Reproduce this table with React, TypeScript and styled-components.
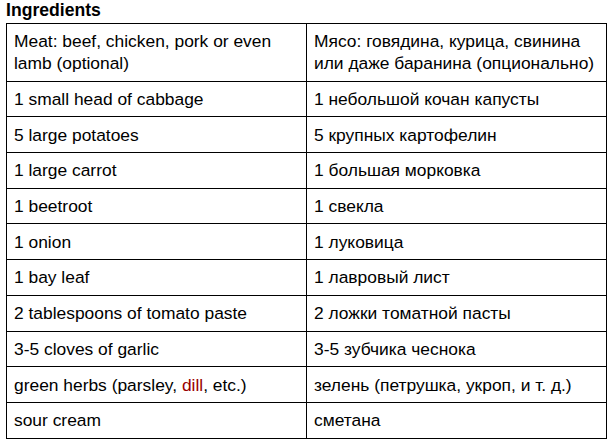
import styled, { createGlobalStyle } from "styled-components";

const GlobalStyle = createGlobalStyle`
  body {
    margin: 0;
    background: #fff;
    font-family: "Liberation Sans", Arial, sans-serif;
    color: #000;
  }
`;

const Page = styled.div`
  display: flex;
  flex-direction: column;
  gap: 2px;
  padding: 0 4px 0 6px;
`;

const Title = styled.div`
  height: 21px;
  font-size: 17.6px;
  font-weight: 700;
  line-height: 21px;
`;

const Table = styled.table`
  border-collapse: collapse;
  width: 601px;
  table-layout: fixed;
  font-size: 17.4px;
  line-height: 22px;
`;

const Cell = styled.td`
  border: 1px solid #000;
  padding: 6.35px 4px 6.35px 7px;
  vertical-align: top;
  width: 50%;
`;

const Flagged = styled.span`
  color: #990000;
`;

type Row = { en: React.ReactNode; ru: string };

const rows: Row[] = [
  {
    en: "Meat: beef, chicken, pork or even lamb (optional)",
    ru: "Мясо: говядина, курица, свинина или даже баранина (опционально)",
  },
  { en: "1 small head of cabbage", ru: "1 небольшой кочан капусты" },
  { en: "5 large potatoes", ru: "5 крупных картофелин" },
  { en: "1 large carrot", ru: "1 большая морковка" },
  { en: "1 beetroot", ru: "1 свекла" },
  { en: "1 onion", ru: "1 луковица" },
  { en: "1 bay leaf", ru: "1 лавровый лист" },
  { en: "2 tablespoons of tomato paste", ru: "2 ложки томатной пасты" },
  { en: "3-5 cloves of garlic", ru: "3-5 зубчика чеснока" },
  {
    en: (
      <>
        green herbs (parsley, <Flagged>dill</Flagged>, etc.)
      </>
    ),
    ru: "зелень (петрушка, укроп, и т. д.)",
  },
  { en: "sour cream", ru: "сметана" },
];

export default function App() {
  return (
    <Page>
      <GlobalStyle />
      <Title>Ingredients</Title>
      <Table>
        <tbody>
          {rows.map((row, i) => (
            <tr key={i}>
              <Cell>{row.en}</Cell>
              <Cell>{row.ru}</Cell>
            </tr>
          ))}
        </tbody>
      </Table>
    </Page>
  );
}
